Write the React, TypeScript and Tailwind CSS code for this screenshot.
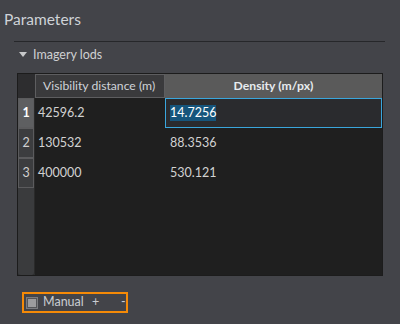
import React from "react";

const rows = [
  ["42596.2", "14.7256"],
  ["130532", "88.3536"],
  ["400000", "530.121"],
];

export default function App() {
  return (
    <div
      className="w-[400px] h-[324px] bg-[#434449] flex flex-col text-[#d4d4d4] overflow-hidden"
      style={{ fontFamily: 'Lato, "Noto Sans", sans-serif' }}
    >
      <div className="pl-[4px] pt-[9px] h-[41px] text-[15.5px] leading-[20px] text-[#cfd3d8]">Parameters</div>
      <div className="ml-[14px] w-[371px] h-[1px] bg-[#26272a]" />
      <div className="flex items-center h-[24px] mt-[1px] pl-[19px] text-[12.5px] text-[#cfd0d2]">
        <svg width="8" height="6" viewBox="0 0 8 6" className="mr-[6px]">
          <path d="M0 0 L8 0 L4 5 Z" fill="#c8c9cb" />
        </svg>
        <span>Imagery lods</span>
      </div>
      <div className="ml-[17px] mt-[6px] w-[366px] h-[203px] border border-[#1c1c1c] bg-[#1f1f1f] flex">
        {/* row header column */}
        <div className="w-[17px] flex flex-col bg-[#2e2f31]">
          <div className="h-[24px] bg-[#2d2d2f]" />
          <div className="flex-1 flex flex-col bg-[#3a3b3d] rounded-b-[3px] border-r border-[#2a2a2a]">
            {rows.map((_, i) => (
              <div
                key={i}
                className={`h-[30px] flex items-center justify-center text-[12.5px] border border-[#5b5b5d] ${
                  i === 0 ? "bg-[#5e5f61] text-white font-bold" : "bg-[#3c3d3f] text-[#d0d0d0]"
                }`}
              >
                {i + 1}
              </div>
            ))}
          </div>
        </div>
        <div className="flex-1 flex flex-col">
          <div className="h-[24px] flex text-[12.2px]">
            <div className="w-[130px] bg-[#3a3a3c] border border-[#5e5e60] flex items-center pl-[7px] text-[#cfd3d8]">
              Visibility distance (m)
            </div>
            <div className="flex-1 bg-[#5a5a5a] flex items-center justify-center font-bold text-[#e8ecef]">
              Density (m/px)
            </div>
          </div>
          {rows.map((r, i) => (
            <div key={i} className="h-[30px] flex text-[12.5px] text-[#d2d2d2]">
              <div className="w-[130px] flex items-center pl-[3px]">{r[0]}</div>
              {i === 0 ? (
                <div className="flex-1 border border-[#3aa6dc] bg-[#2a2b2e] flex items-center pl-[4px]">
                  <span className="bg-[#16557c] text-white leading-[16px]">{r[1]}</span>
                </div>
              ) : (
                <div className="flex-1 flex items-center pl-[5px]">{r[1]}</div>
              )}
            </div>
          ))}
        </div>
      </div>
      <div className="ml-[22px] mt-[16px] w-[106px] h-[21px] border-2 border-[#f58a07] flex items-center text-[12.5px] text-[#c9ccd0]">
        <div className="ml-[2px] w-[12px] h-[12px] border border-[#7b7c7f] bg-[#555659] flex items-center justify-center">
          <div className="w-[8px] h-[8px] bg-[#9c9c9e]" />
        </div>
        <span className="ml-[5px] w-[49px]">Manual</span>
        <span className="w-[29px]">+</span>
        <span>-</span>
      </div>
    </div>
  );
}
